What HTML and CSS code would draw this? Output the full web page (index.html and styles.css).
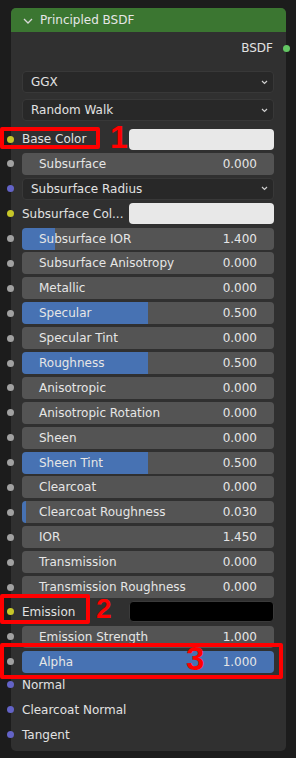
FILE: index.html
```html
<!DOCTYPE html>
<html>

<head>
    <title>Principled BSDF</title>
    <meta charset="UTF-8">
    <link rel="stylesheet" href="styles.css">
</head>

<body>
    <div class="node">
        <div class="node-header">
            <svg class="collapse" width="10" height="6" viewBox="0 0 10 6">
                <polyline points="1,1 5,5 9,1" fill="none" stroke="#d8d8d8" stroke-width="1.3"/>
            </svg>
            <span>Principled BSDF</span>
        </div>

        <div class="output-row">
            <span>BSDF</span>
            <i class="socket out green"></i>
        </div>

        <div class="dropdown first">GGX<svg class="arrow" width="7" height="5" viewBox="0 0 7 5"><polyline points="1,1 3.5,3.5 6,1" fill="none" stroke="#cfcfcf" stroke-width="1.2"/></svg></div>
        <div class="dropdown">Random Walk<svg class="arrow" width="7" height="5" viewBox="0 0 7 5"><polyline points="1,1 3.5,3.5 6,1" fill="none" stroke="#cfcfcf" stroke-width="1.2"/></svg></div>

        <div class="row base">
            <i class="socket yellow"></i>
            <span class="label">Base Color</span>
            <div class="swatch light"></div>
        </div>
        <div class="row">
            <i class="socket grey"></i>
            <div class="slider" style="--v:0%"><span>Subsurface</span><span>0.000</span></div>
        </div>
        <div class="row">
            <i class="socket purple"></i>
            <div class="dropdown inline">Subsurface Radius<svg class="arrow" width="7" height="5" viewBox="0 0 7 5"><polyline points="1,1 3.5,3.5 6,1" fill="none" stroke="#cfcfcf" stroke-width="1.2"/></svg></div>
        </div>
        <div class="row">
            <i class="socket yellow"></i>
            <span class="label">Subsurface Col...</span>
            <div class="swatch light"></div>
        </div>
        <div class="row">
            <i class="socket grey"></i>
            <div class="slider" style="--v:13%"><span>Subsurface IOR</span><span>1.400</span></div>
        </div>
        <div class="row">
            <i class="socket grey"></i>
            <div class="slider" style="--v:0%"><span>Subsurface Anisotropy</span><span>0.000</span></div>
        </div>
        <div class="row">
            <i class="socket grey"></i>
            <div class="slider" style="--v:0%"><span>Metallic</span><span>0.000</span></div>
        </div>
        <div class="row">
            <i class="socket grey"></i>
            <div class="slider" style="--v:50%"><span>Specular</span><span>0.500</span></div>
        </div>
        <div class="row">
            <i class="socket grey"></i>
            <div class="slider" style="--v:0%"><span>Specular Tint</span><span>0.000</span></div>
        </div>
        <div class="row">
            <i class="socket grey"></i>
            <div class="slider" style="--v:50%"><span>Roughness</span><span>0.500</span></div>
        </div>
        <div class="row">
            <i class="socket grey"></i>
            <div class="slider" style="--v:0%"><span>Anisotropic</span><span>0.000</span></div>
        </div>
        <div class="row">
            <i class="socket grey"></i>
            <div class="slider" style="--v:0%"><span>Anisotropic Rotation</span><span>0.000</span></div>
        </div>
        <div class="row">
            <i class="socket grey"></i>
            <div class="slider" style="--v:0%"><span>Sheen</span><span>0.000</span></div>
        </div>
        <div class="row">
            <i class="socket grey"></i>
            <div class="slider" style="--v:50%"><span>Sheen Tint</span><span>0.500</span></div>
        </div>
        <div class="row">
            <i class="socket grey"></i>
            <div class="slider" style="--v:0%"><span>Clearcoat</span><span>0.000</span></div>
        </div>
        <div class="row">
            <i class="socket grey"></i>
            <div class="slider" style="--v:1.6%"><span>Clearcoat Roughness</span><span>0.030</span></div>
        </div>
        <div class="row">
            <i class="socket grey"></i>
            <div class="slider" style="--v:0%"><span>IOR</span><span>1.450</span></div>
        </div>
        <div class="row">
            <i class="socket grey"></i>
            <div class="slider" style="--v:0%"><span>Transmission</span><span>0.000</span></div>
        </div>
        <div class="row">
            <i class="socket grey"></i>
            <div class="slider" style="--v:0%"><span>Transmission Roughness</span><span>0.000</span></div>
        </div>
        <div class="row">
            <i class="socket yellow"></i>
            <span class="label">Emission</span>
            <div class="swatch dark"></div>
        </div>
        <div class="row">
            <i class="socket grey"></i>
            <div class="slider" style="--v:0%"><span>Emission Strength</span><span>1.000</span></div>
        </div>
        <div class="row">
            <i class="socket grey"></i>
            <div class="slider" style="--v:100%"><span>Alpha</span><span>1.000</span></div>
        </div>
        <div class="row plain first-plain">
            <i class="socket purple"></i>
            <span class="label">Normal</span>
        </div>
        <div class="row plain">
            <i class="socket purple"></i>
            <span class="label">Clearcoat Normal</span>
        </div>
        <div class="row plain">
            <i class="socket purple"></i>
            <span class="label">Tangent</span>
        </div>
    </div>

    <!-- annotations drawn over the screenshot -->
    <div class="mark box-1"></div>
    <div class="mark-num num-1">1</div>
    <div class="mark box-2"></div>
    <div class="mark-num num-2">2</div>
    <div class="mark box-3"></div>
    <div class="mark-num num-3">3</div>
</body>

</html>
```

FILE: styles.css
```css
body {
    margin: 0;
    height: 758px;
    background-color: #1c1c1c;
    font-family: "DejaVu Sans", sans-serif;
    font-size: 12px;
    color: #e2e2e2;
    position: relative;
    overflow: hidden;
}

.node {
    margin: 8px 0 0 11px;
    width: 275px;
    height: 743px;
    background-color: #303030;
    border-radius: 5px;
    box-sizing: border-box;
    padding: 0 12px 0 11px;
}

.node-header {
    margin: 0 -12px 0 -11px;
    height: 24px;
    display: flex;
    align-items: center;
    background-color: #3b7631;
    border-radius: 5px 5px 0 0;
    font-size: 12px;
    color: #e6e6e6;
}

.node-header .collapse {
    margin: 1px 7px 0 12px;
}

.output-row {
    margin-top: 4px;
    height: 24px;
    display: flex;
    align-items: center;
    justify-content: flex-end;
    margin-right: -12px;
}

.output-row span {
    margin-right: 10px;
}

.socket {
    display: block;
    width: 7px;
    height: 7px;
    border-radius: 50%;
    flex: none;
}

.socket.out {
    margin-right: -4px;
}

.green { background-color: #63c763; }
.grey { background-color: #a1a1a1; }
.yellow { background-color: #c7c729; }
.purple { background-color: #6363c7; }

.dropdown {
    height: 22px;
    box-sizing: border-box;
    display: flex;
    align-items: center;
    padding: 0 5px 0 8px;
    background-color: #282828;
    border: 1px solid #383838;
    border-radius: 4px;
    margin-top: 6px;
}

.dropdown.first {
    margin-top: 11px;
}

.dropdown .arrow {
    margin-left: auto;
}

.dropdown.inline {
    flex: 1;
    margin-top: 0;
}

.row {
    height: 22px;
    display: flex;
    align-items: center;
    margin: 2.9px 0 0 -15px;
}

.row.base {
    margin-top: 7px;
}

.row .socket {
    margin-right: 8px;
}

.row.plain {
    margin-top: 3px;
}

.row.first-plain {
    margin-top: 1px;
}

.label {
    white-space: nowrap;
}

.swatch {
    margin-left: auto;
    width: 145px;
    height: 21px;
    border-radius: 4px;
    flex: none;
}

.swatch.light { background-color: #e8e8e8; }
.swatch.dark { background-color: #000000; border: 1px solid #3a3a3a; box-sizing: border-box; }

.slider {
    flex: 1;
    height: 22px;
    display: flex;
    align-items: center;
    justify-content: space-between;
    padding: 0 17px;
    border-radius: 4px;
    background: linear-gradient(to right, #4772b3 var(--v), #545454 var(--v));
    color: #e6e6e6;
    white-space: nowrap;
}

.mark {
    position: absolute;
    border: 4px solid #ff0000;
    border-radius: 2px;
    box-sizing: border-box;
}

.box-1 { left: 0; top: 127px; width: 100px; height: 22px; }
.box-2 { left: 0; top: 594px; width: 90px; height: 30px; }
.box-3 { left: 0; top: 643px; width: 283px; height: 36px; }

.mark-num {
    position: absolute;
    font-family: "Liberation Sans", sans-serif;
    font-weight: bold;
    color: #ff0000;
    line-height: 1;
}

.num-1 { left: 110px; top: 121px; font-size: 32px; }
.num-2 { left: 96px; top: 595px; font-size: 28px; }
.num-3 { left: 186px; top: 642px; font-size: 33px; }
```
